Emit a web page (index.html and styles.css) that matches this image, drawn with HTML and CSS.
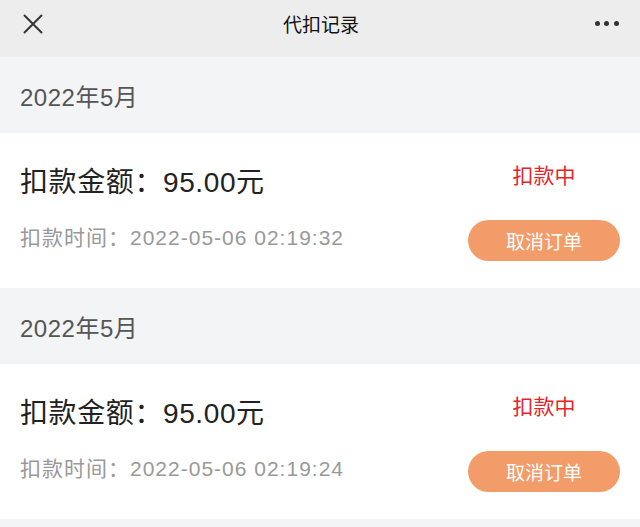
FILE: index.html
```html
<!DOCTYPE html>
<html lang="zh-CN">
<head>
    <meta charset="UTF-8">
    <meta name="viewport" content="width=device-width, initial-scale=1.0">
    <title>代扣记录</title>
    <link rel="stylesheet" href="styles.css">
</head>
<body>

<header class="nav-bar">
    <span class="nav-close">
        <svg width="20" height="20" viewBox="0 0 20 20">
            <path d="M1.5 1.5 L18.5 18.5 M18.5 1.5 L1.5 18.5" stroke="#333" stroke-width="1.9" fill="none" stroke-linecap="round"/>
        </svg>
    </span>
    <div class="nav-title">代扣记录</div>
    <span class="nav-more">
        <i></i><i></i><i></i>
    </span>
</header>

<div class="month">2022年5月</div>
<div class="record">
    <div class="record-info">
        <div class="record-amount">扣款金额：95.00元</div>
        <div class="record-time">扣款时间：2022-05-06 02:19:32</div>
    </div>
    <div class="record-side">
        <div class="record-status">扣款中</div>
        <button class="cancel-btn">取消订单</button>
    </div>
</div>

<div class="month">2022年5月</div>
<div class="record">
    <div class="record-info">
        <div class="record-amount">扣款金额：95.00元</div>
        <div class="record-time">扣款时间：2022-05-06 02:19:24</div>
    </div>
    <div class="record-side">
        <div class="record-status">扣款中</div>
        <button class="cancel-btn">取消订单</button>
    </div>
</div>

</body>
</html>
```

FILE: styles.css
```css
/* General Styling */
body {
    font-family: 'Liberation Sans', 'Noto Sans CJK SC', sans-serif;
    margin: 0;
    padding: 0;
    background-color: #f3f4f6;
    color: #222;
}

/* Top bar */
.nav-bar {
    height: 57px;
    background-color: #ededed;
    display: flex;
    align-items: center;
    justify-content: space-between;
    padding: 0 21px 10px 23px;
    box-sizing: border-box;
}

.nav-close {
    width: 20px;
    height: 20px;
    display: flex;
}

.nav-title {
    font-size: 19px;
    color: #111;
    margin-left: 4px;
}

.nav-more {
    width: 24px;
    display: flex;
    justify-content: space-between;
}

.nav-more i {
    width: 5px;
    height: 5px;
    border-radius: 50%;
    background-color: #333;
}

/* Month heading */
.month {
    height: 76px;
    display: flex;
    align-items: center;
    padding: 0 20px;
    box-sizing: border-box;
    font-size: 24px;
    letter-spacing: 0.5px;
    color: #555;
}

/* Record card */
.record {
    background-color: #fff;
    display: flex;
    justify-content: space-between;
    padding: 28px 20px 27px;
}

.record-info {
    padding-top: 4px;
}

.record-amount {
    font-size: 28px;
    line-height: 36px;
    letter-spacing: 0.6px;
    color: #222;
}

.record-time {
    font-size: 21px;
    line-height: 28px;
    letter-spacing: 1px;
    color: #999;
    margin-top: 23px;
}

.record-side {
    width: 152px;
    display: flex;
    flex-direction: column;
    align-items: center;
}

.record-status {
    font-size: 21px;
    line-height: 30px;
    color: #e3262b;
}

.cancel-btn {
    width: 152px;
    height: 41px;
    margin-top: 29px;
    border: none;
    border-radius: 21px;
    background-color: #f19c69;
    color: #fff;
    font-family: inherit;
    font-size: 19px;
    padding: 0;
}
```
